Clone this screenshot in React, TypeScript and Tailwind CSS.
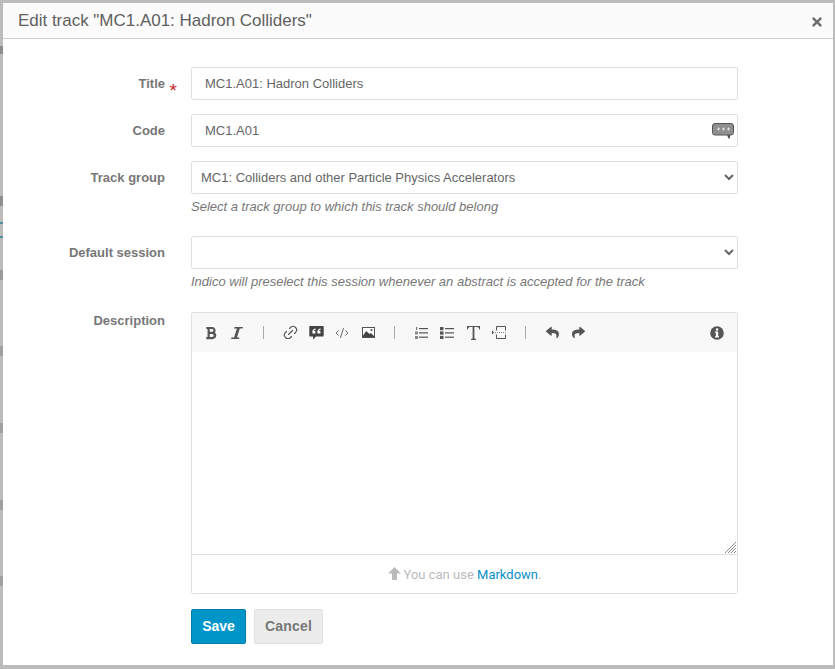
import React from "react";
import { FaBold, FaReply, FaShare, FaTimes } from "react-icons/fa";
import { Link2, CodeXml } from "lucide-react";

const Btn = ({ children }: { children: React.ReactNode }) => (
  <span className="flex h-[40px] w-[26px] items-center justify-center text-[#555]">{children}</span>
);
const Sep = () => (
  <span className="flex h-[40px] w-[27px] items-center justify-center">
    <span className="block h-[13px] w-px bg-[#aaa]" />
  </span>
);

const Italic = () => (
  <svg width="12" height="12" viewBox="0 0 12 12" fill="#555">
    <path d="M3.6 0H12l-.5 1.6H8.8L6 10.4h2.4L8 12H0l.5-1.6h2.6l2.8-8.8H3.1z" />
  </svg>
);
const Quote = () => (
  <svg width="15" height="15" viewBox="0 0 15 15">
    <path d="M1 1h13a.7.7 0 0 1 .7.7v9a.7.7 0 0 1-.7.7H7l-3 3v-3H1a.7.7 0 0 1-.7-.7v-9A.7.7 0 0 1 1 1z" fill="#444" />
    <path d="M6.6 3.6C5 3.9 3.4 4.8 3.4 6.6v2h3v-2.6H5c0-.6.7-1.1 1.6-1.2zM11.6 3.6C10 3.9 8.4 4.8 8.4 6.6v2h3v-2.6H10c0-.6.7-1.1 1.6-1.2z" fill="#fff" />
  </svg>
);
const Picture = () => (
  <svg width="13" height="11" viewBox="0 0 13 11">
    <rect x="0.5" y="0.5" width="12" height="10" fill="#fff" stroke="#555" />
    <path d="M1 10V8.5l3.2-4.5L7.5 7l1.4-1L12 9v1z" fill="#444" />
    <circle cx="9.5" cy="3" r="1.1" fill="#555" />
  </svg>
);
const OrderedList = () => (
  <svg width="13" height="12" viewBox="0 0 13 12" fill="#555">
    <rect x="4" y="1" width="9" height="1.2" />
    <rect x="4" y="5.3" width="9" height="1.2" />
    <rect x="4" y="9.6" width="9" height="1.2" />
    <rect x="1" y="0" width="1.2" height="3" fill="#777" />
    <rect x="0" y="4.4" width="3" height="3" fill="#888" />
    <rect x="0" y="9" width="3" height="3" fill="#888" />
  </svg>
);
const BulletList = () => (
  <svg width="14" height="12" viewBox="0 0 14 12" fill="#555">
    <rect x="0" y="0" width="3.5" height="3.2" />
    <rect x="0" y="4.4" width="3.5" height="3.2" />
    <rect x="0" y="8.8" width="3.5" height="3.2" />
    <rect x="5" y="1" width="9" height="1.2" />
    <rect x="5" y="5.3" width="9" height="1.2" />
    <rect x="5" y="9.6" width="9" height="1.2" />
  </svg>
);
const SerifT = () => (
  <svg width="13" height="14" viewBox="0 0 13 14" fill="#555">
    <path d="M0 0h13v3.6h-.8C12 2.2 11.5 1.1 10 1.1H7.4v11.3l1.6.7v.9H4v-.9l1.6-.7V1.1H3C1.5 1.1 1 2.2.8 3.6H0z" />
  </svg>
);
const HRule = () => (
  <svg width="14" height="13" viewBox="0 0 14 13" fill="none" stroke="#555">
    <path d="M4.5 4.5V.5h9v4M4.5 8.5v4h9v-4" />
    <path d="M3 6.5h11" strokeDasharray="1 1" stroke="#888" />
    <path d="M0 4.5l2 2-2 2z" fill="#444" stroke="none" />
  </svg>
);
const Info = () => (
  <svg width="14" height="14" viewBox="0 0 14 14">
    <circle cx="7" cy="7" r="6.8" fill="#555" />
    <rect x="5.9" y="2.4" width="2.3" height="2.2" fill="#fff" />
    <path d="M5 5.6h3.2v4.6H9v1.2H5v-1.2h.9V6.8H5z" fill="#fff" />
  </svg>
);
const KeyBubble = () => (
  <svg width="22" height="16" viewBox="0 0 22 16">
    <rect x="0.5" y="0.5" width="21" height="11.5" rx="2.5" fill="#8f8f8f" stroke="#555" />
    <path d="M15 12h3v3.5h-1.5z" fill="#555" />
    <g fill="#e5e5e5">
      <path d="M6 4.5h1v1h1v1H7v1H6v-1H5v-1h1z" />
      <path d="M11 4.5h1v1h1v1h-1v1h-1v-1h-1v-1h1z" />
      <path d="M16 4.5h1v1h1v1h-1v1h-1v-1h-1v-1h1z" />
    </g>
  </svg>
);
const Grip = () => (
  <svg width="11" height="11" viewBox="0 0 11 11" stroke="#8a8a8a" strokeWidth="1">
    <path d="M0 11L11 0M3 11L11 3M6 11L11 6M9 11L11 9" />
  </svg>
);

const ticks: [number, number, string][] = [
  [46, 8, "#8c8c8c"], [196, 10, "#8f8f8f"], [222, 2, "#4d8f9f"], [236, 2, "#4d8f9f"],
  [270, 10, "#9a9a9a"], [346, 10, "#a0a0a0"], [423, 10, "#a0a0a0"], [500, 10, "#a0a0a0"], [576, 10, "#a0a0a0"],
];

const labelCls = "pt-[8px] pr-[26px] text-right text-[13px] font-bold leading-[17px] text-[#777]";
const fieldCls = "h-[33px] w-full border border-[#e0e0e0] bg-white text-[13px] text-[#666] rounded-[2px] outline-none";
const helpCls = "mt-[5px] text-[13px] italic leading-[16px] text-[#777]";

export default function App() {
  return (
    <div className="relative flex h-[669px] w-[835px] bg-[#bcbcbc] pt-[3px] pr-[2px] pb-[4px] pl-[3px] font-['Liberation_Sans',sans-serif]">
      {ticks.map(([top, h, c]) => (
        <span key={top} className="absolute left-0 w-[3px]" style={{ top, height: h, backgroundColor: c }} />
      ))}
      <div className="flex w-full flex-col bg-white">
        <header className="flex h-[36px] shrink-0 items-center justify-between border-b border-[#cfcfcf] bg-[#fbfbfb] pl-[15px] pr-[9px]">
          <h1 className="pt-[1px] text-[17px] font-normal leading-[20px] tracking-[-0.02px] text-[#606060]">Edit track "MC1.A01: Hadron Colliders"</h1>
          <FaTimes className="mt-[2px] text-[#707070]" size={14} />
        </header>
        <form className="grid grid-cols-[188px_547px] pt-[28px]">
          <label className={`${labelCls} relative`}>
            Title
            <span className="absolute right-[14px] top-[15px] text-[19px] font-normal leading-[17px] text-[#c8242b]">*</span>
          </label>
          <input readOnly value="MC1.A01: Hadron Colliders" className={`${fieldCls} pl-[13px]`} />

          <label className={`${labelCls} mt-[14px]`}>Code</label>
          <div className="relative mt-[14px]">
            <input readOnly value="MC1.A01" className={`${fieldCls} pl-[13px]`} />
            <span className="absolute right-[4px] top-[9px]"><KeyBubble /></span>
          </div>

          <label className={`${labelCls} mt-[14px]`}>Track group</label>
          <div className="mt-[14px]">
            <select className={`${fieldCls} pl-[5px]`} defaultValue="a">
              <option value="a">MC1: Colliders and other Particle Physics Accelerators</option>
            </select>
            <p className={helpCls}>Select a track group to which this track should belong</p>
          </div>

          <label className={`${labelCls} mt-[21px]`}>Default session</label>
          <div className="mt-[21px]">
            <select className={`${fieldCls} pl-[5px]`} defaultValue="">
              <option value=""></option>
            </select>
            <p className={helpCls}>Indico will preselect this session whenever an abstract is accepted for the track</p>
          </div>

          <label className={`${labelCls} mt-[22px] !pt-0`}>Description</label>
          <div className="mt-[22px] flex flex-col rounded-[2px] border border-[#e0e0e0]">
            <div className="flex h-[39px] items-center bg-[#f8f8f8] px-[6px]">
              <Btn><FaBold size={14} /></Btn>
              <Btn><Italic /></Btn>
              <Sep />
              <Btn><Link2 size={17} strokeWidth={1.6} className="-rotate-45 text-[#555]" /></Btn>
              <Btn><Quote /></Btn>
              <Btn><CodeXml size={14} strokeWidth={1.5} className="text-[#555]" /></Btn>
              <Btn><Picture /></Btn>
              <Sep />
              <Btn><OrderedList /></Btn>
              <Btn><BulletList /></Btn>
              <Btn><SerifT /></Btn>
              <Btn><HRule /></Btn>
              <Sep />
              <Btn><FaReply size={13} /></Btn>
              <Btn><FaShare size={13} /></Btn>
              <span className="ml-auto flex h-[40px] items-center pr-[7px]"><Info /></span>
            </div>
            <div className="relative">
              <textarea readOnly className="block h-[203px] w-full resize-none border-b border-[#e0e0e0] bg-white outline-none" />
              <span className="absolute bottom-[2px] right-[1px] leading-none"><Grip /></span>
            </div>
            <div className="flex h-[38px] items-center justify-center bg-white pt-[1px] font-['Roboto',sans-serif] text-[13px] text-[#bbb]">
              <svg width="13" height="13" viewBox="0 0 13 13" className="mb-[2px] mr-[3px]"><path d="M6.5 0L13 6.5H9V13H4V6.5H0z" fill="#bbb" /></svg>
              You can use&nbsp;<a className="text-[#0b8fc7]">Markdown</a>.
            </div>
          </div>

          <div />
          <div className="mt-[15px] flex gap-[8px]">
            <button type="button" className="h-[35px] w-[55px] rounded-[2px] border border-[#007cac] bg-[#0095c9] text-[14px] font-bold text-white">Save</button>
            <button type="button" className="h-[35px] w-[69px] rounded-[2px] border border-[#e0e0e0] bg-[#ececec] text-[14px] font-bold tracking-[0.2px] text-[#777]">Cancel</button>
          </div>
        </form>
      </div>
    </div>
  );
}
